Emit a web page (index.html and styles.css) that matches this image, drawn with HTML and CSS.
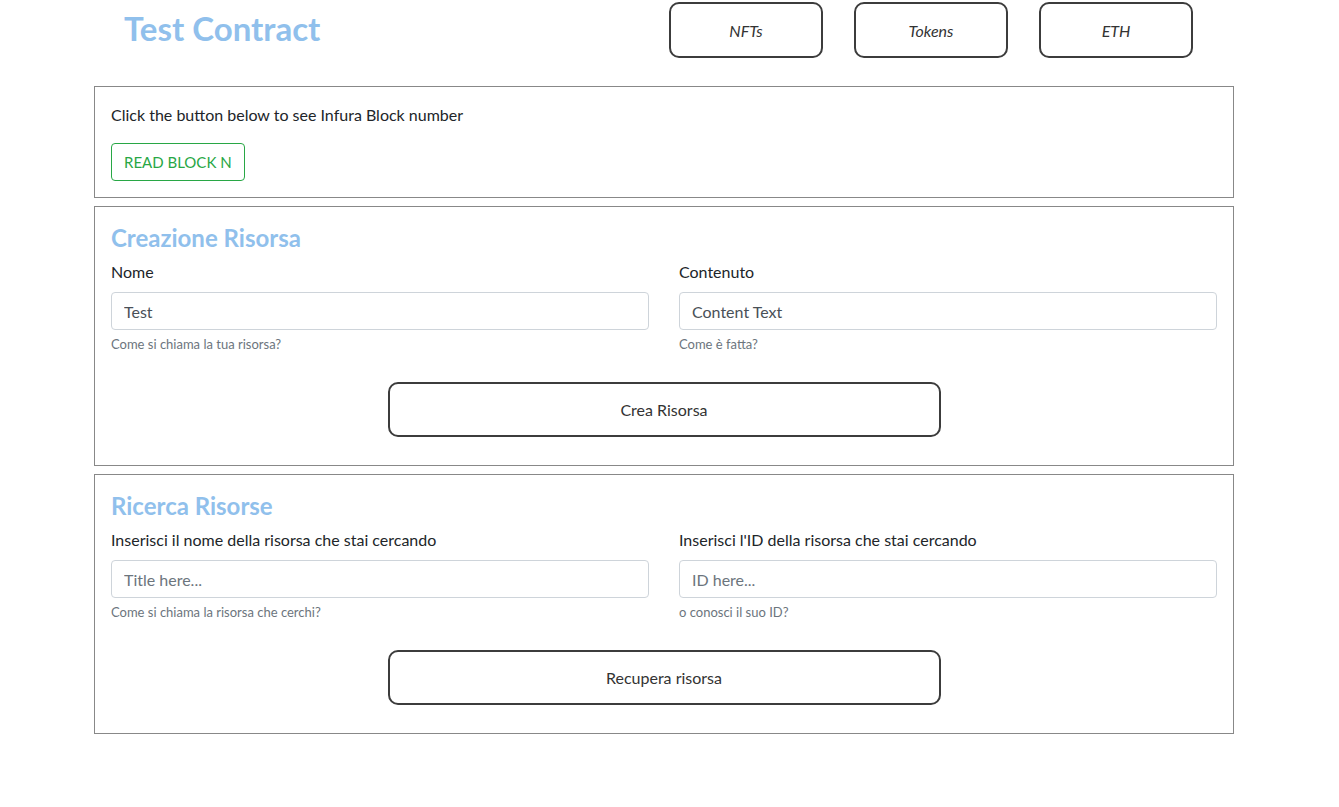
FILE: index.html
```html
<!DOCTYPE html>
<html lang="it">
<head>
<meta charset="utf-8">
<title>Test Contract</title>
<link rel="stylesheet" href="styles.css">
</head>
<body>
<div class="page">
  <header class="header">
    <h1 class="brand">Test Contract</h1>
    <nav class="nav">
      <button class="nav-btn">NFTs</button>
      <button class="nav-btn">Tokens</button>
      <button class="nav-btn">ETH</button>
    </nav>
  </header>

  <section class="card">
    <p class="lead">Click the button below to see Infura Block number</p>
    <button class="btn-outline-success">READ BLOCK N</button>
  </section>

  <section class="card">
    <h3 class="card-title">Creazione Risorsa</h3>
    <div class="form-row">
      <div class="field">
        <label class="label">Nome</label>
        <input class="input" type="text" value="Test">
        <small class="hint">Come si chiama la tua risorsa?</small>
      </div>
      <div class="field">
        <label class="label">Contenuto</label>
        <input class="input" type="text" value="Content Text">
        <small class="hint">Come è fatta?</small>
      </div>
    </div>
    <div class="actions">
      <button class="big-btn">Crea Risorsa</button>
    </div>
  </section>

  <section class="card">
    <h3 class="card-title">Ricerca Risorse</h3>
    <div class="form-row">
      <div class="field">
        <label class="label">Inserisci il nome della risorsa che stai cercando</label>
        <input class="input" type="text" placeholder="Title here...">
        <small class="hint">Come si chiama la risorsa che cerchi?</small>
      </div>
      <div class="field">
        <label class="label">Inserisci l'ID della risorsa che stai cercando</label>
        <input class="input" type="text" placeholder="ID here...">
        <small class="hint">o conosci il suo ID?</small>
      </div>
    </div>
    <div class="actions">
      <button class="big-btn">Recupera risorsa</button>
    </div>
  </section>
</div>
</body>
</html>
```

FILE: styles.css
```css
* { box-sizing: border-box; }

body {
  margin: 0;
  background: #fff;
  color: #212529;
  font-family: "Lato", "Open Sans", sans-serif;
  font-size: 16px;
  line-height: 1.5;
}

.page {
  width: 1140px;
  margin-left: 94px;
}

.header {
  display: flex;
  justify-content: space-between;
  align-items: flex-start;
  height: 86px;
  padding: 2px 41px 0 30px;
}

.brand {
  margin: 6px 0 0;
  font-size: 33px;
  font-weight: 700;
  line-height: 40px;
  color: #90c0ec;
}

.nav {
  display: flex;
  gap: 31px;
}

.nav-btn {
  width: 154px;
  height: 56px;
  border: 2px solid #3c3c3c;
  border-radius: 10px;
  background: #fff;
  font-family: inherit;
  font-size: 16px;
  font-style: italic;
  color: #333;
}

.card {
  border: 1px solid #888;
  padding: 16px;
  margin-bottom: 8px;
}

.lead {
  margin: 0 0 16px;
  line-height: 24px;
}

.btn-outline-success {
  height: 38px;
  padding: 0 12px;
  border: 1px solid #28a745;
  border-radius: 4px;
  background: #fff;
  color: #28a745;
  font-family: inherit;
  font-size: 15px;
}

.card-title {
  margin: 0 0 7px;
  font-size: 24px;
  font-weight: 700;
  line-height: 30px;
  color: #90c0ec;
}

.form-row {
  display: grid;
  grid-template-columns: 1fr 1fr;
  column-gap: 30px;
}

.field {
  display: flex;
  flex-direction: column;
}

.label {
  line-height: 24px;
  margin-bottom: 8px;
}

.input {
  height: 38px;
  padding: 0 12px;
  border: 1px solid #ced4da;
  border-radius: 4px;
  font-family: inherit;
  font-size: 16px;
  color: #495057;
}

.input::placeholder { color: #6c757d; }

.hint {
  margin-top: 4px;
  line-height: 20px;
  font-size: 13px;
  color: #6c757d;
}

.actions {
  display: flex;
  justify-content: center;
  padding: 28px 0 12px;
}

.big-btn {
  width: 553px;
  height: 55px;
  border: 2px solid #3c3c3c;
  border-radius: 10px;
  background: #fff;
  font-family: inherit;
  font-size: 16px;
  color: #333;
}
```
